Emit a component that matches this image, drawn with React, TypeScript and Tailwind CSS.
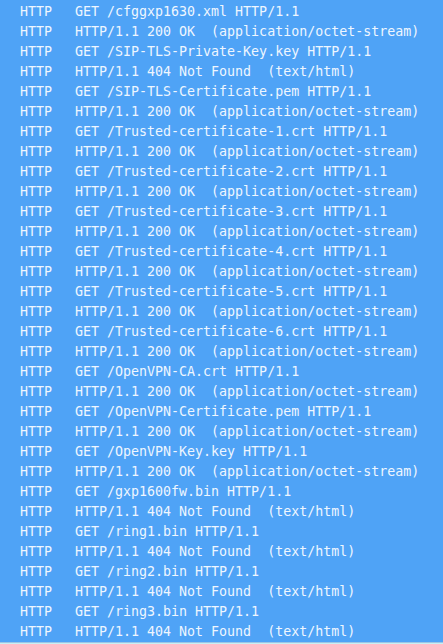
const lines: string[] = [
  "GET /cfggxp1630.xml HTTP/1.1",
  "HTTP/1.1 200 OK  (application/octet-stream)",
  "GET /SIP-TLS-Private-Key.key HTTP/1.1",
  "HTTP/1.1 404 Not Found  (text/html)",
  "GET /SIP-TLS-Certificate.pem HTTP/1.1",
  "HTTP/1.1 200 OK  (application/octet-stream)",
  "GET /Trusted-certificate-1.crt HTTP/1.1",
  "HTTP/1.1 200 OK  (application/octet-stream)",
  "GET /Trusted-certificate-2.crt HTTP/1.1",
  "HTTP/1.1 200 OK  (application/octet-stream)",
  "GET /Trusted-certificate-3.crt HTTP/1.1",
  "HTTP/1.1 200 OK  (application/octet-stream)",
  "GET /Trusted-certificate-4.crt HTTP/1.1",
  "HTTP/1.1 200 OK  (application/octet-stream)",
  "GET /Trusted-certificate-5.crt HTTP/1.1",
  "HTTP/1.1 200 OK  (application/octet-stream)",
  "GET /Trusted-certificate-6.crt HTTP/1.1",
  "HTTP/1.1 200 OK  (application/octet-stream)",
  "GET /OpenVPN-CA.crt HTTP/1.1",
  "HTTP/1.1 200 OK  (application/octet-stream)",
  "GET /OpenVPN-Certificate.pem HTTP/1.1",
  "HTTP/1.1 200 OK  (application/octet-stream)",
  "GET /OpenVPN-Key.key HTTP/1.1",
  "HTTP/1.1 200 OK  (application/octet-stream)",
  "GET /gxp1600fw.bin HTTP/1.1",
  "HTTP/1.1 404 Not Found  (text/html)",
  "GET /ring1.bin HTTP/1.1",
  "HTTP/1.1 404 Not Found  (text/html)",
  "GET /ring2.bin HTTP/1.1",
  "HTTP/1.1 404 Not Found  (text/html)",
  "GET /ring3.bin HTTP/1.1",
  "HTTP/1.1 404 Not Found  (text/html)",
];

export default function App() {
  return (
    <div className="w-[443px] h-[644px] flex flex-col bg-[#4fa3f6] overflow-hidden">
      <div className="flex-1 pt-[2px] pl-[20px] font-['DejaVu_Sans_Mono',monospace] text-[13.3px] leading-[20px] text-[#eef6ff]">
        {lines.map((l, i) => (
          <div key={i} className="grid grid-cols-[55px_1fr] whitespace-pre">
            <span>HTTP</span>
            <span>{l}</span>
          </div>
        ))}
      </div>
      <div className="h-[1px] bg-[#9cc6e6]" />
      <div className="h-[1px] bg-[#c8f0f4]" />
    </div>
  );
}
